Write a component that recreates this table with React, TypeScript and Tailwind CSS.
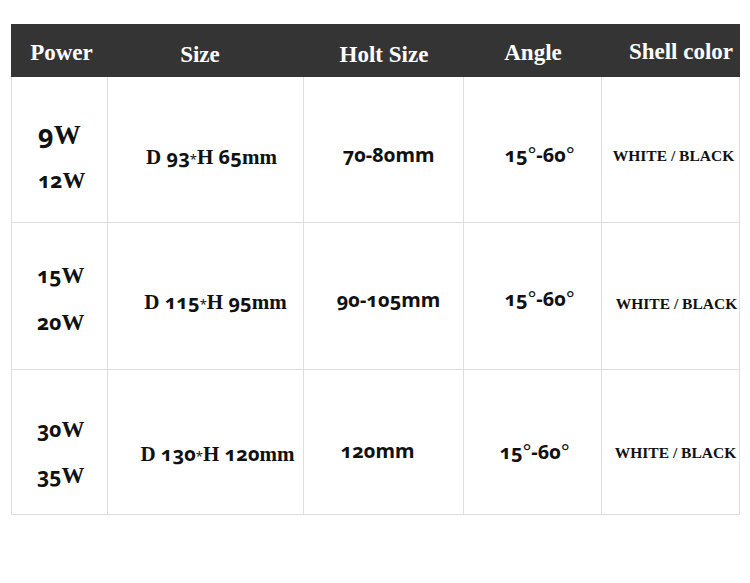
const serif = "font-['Liberation_Serif','Times_New_Roman',serif]";
const num = "font-['Noto_Sans','DejaVu_Sans',sans-serif] oldstyle-nums";

function N({ children, size = 'text-[21px]' }: { children: React.ReactNode; size?: string }) {
  return <span className={`${num} ${size}`}>{children}</span>;
}

function Deg() {
  return <span className="font-normal">°</span>;
}

function Star() {
  return <span className={`${num} text-[13px] font-normal`}>*</span>;
}

export default function App() {
  return (
    <div className={`min-h-[583px] w-[750px] bg-white pt-[24px] pl-[11px] font-bold text-[#111] ${serif}`}>
      <div className="grid w-[729px] grid-cols-[97px_196px_160px_138px_138px]">
        {/* header */}
        <div className="h-[53px] bg-[#343434] pt-[17px] pl-[4px] text-center text-[23px] leading-[24px] text-white">Power</div>
        <div className="h-[53px] bg-[#343434] pt-[19px] pr-[12px] text-center text-[23px] leading-[24px] text-white">Size</div>
        <div className="h-[53px] bg-[#343434] pt-[19px] text-center text-[23px] leading-[24px] text-white">Holt Size</div>
        <div className="h-[53px] bg-[#343434] pt-[17px] text-center text-[23px] leading-[24px] text-white">Angle</div>
        <div className="h-[53px] bg-[#343434] pt-[16px] pl-[20px] text-center text-[23px] leading-[24px] whitespace-nowrap text-white">Shell color</div>

        {/* row 1 */}
        <div className="h-[146px] border-x border-b border-[#dedede] pt-[42px] pl-[26px]">
          <div className="h-[30px] text-[27px] leading-[30px]"><N size="text-[27px]">9</N>W</div>
          <div className="mt-[16px] h-[30px] text-[23px] leading-[30px]"><N>12</N>W</div>
        </div>
        <div className="h-[146px] border-r border-b border-[#dedede] pt-[68px] pl-[12px] text-center text-[21px] leading-[24px] whitespace-nowrap">
          D <N size="text-[20px]">93</N><Star />H <N size="text-[20px]">65</N>mm
        </div>
        <div className={`h-[146px] border-r border-b border-[#dedede] pt-[66px] pl-[10px] text-center text-[20px] leading-[24px] ${num}`}>70-80mm</div>
        <div className={`h-[146px] border-r border-b border-[#dedede] pt-[66px] pl-[14px] text-center text-[20px] leading-[24px] ${num}`}>15<Deg />-60<Deg /></div>
        <div className="h-[146px] border-r border-b border-[#dedede] pt-[69px] pl-[6px] text-center text-[15.5px] leading-[20px] whitespace-nowrap">WHITE / BLACK</div>

        {/* row 2 */}
        <div className="h-[147px] border-x border-b border-[#dedede] pt-[37px] pl-[25px]">
          <div className="h-[30px] text-[23px] leading-[30px]"><N>15</N>W</div>
          <div className="mt-[17px] h-[30px] text-[23px] leading-[30px]"><N>20</N>W</div>
        </div>
        <div className="h-[147px] border-r border-b border-[#dedede] pt-[67px] pl-[20px] text-center text-[21px] leading-[24px] whitespace-nowrap">
          D <N size="text-[20px]">115</N><Star />H <N size="text-[20px]">95</N>mm
        </div>
        <div className={`h-[147px] border-r border-b border-[#dedede] pt-[65px] pl-[10px] text-center text-[20px] leading-[24px] ${num}`}>90-105mm</div>
        <div className={`h-[147px] border-r border-b border-[#dedede] pt-[64px] pl-[14px] text-center text-[20px] leading-[24px] ${num}`}>15<Deg />-60<Deg /></div>
        <div className="h-[147px] border-r border-b border-[#dedede] pt-[71px] pl-[12px] text-center text-[15.5px] leading-[20px] whitespace-nowrap">WHITE / BLACK</div>

        {/* row 3 */}
        <div className="h-[145px] border-x border-b border-[#dedede] pt-[44px] pl-[25px]">
          <div className="h-[30px] text-[23px] leading-[30px]"><N>30</N>W</div>
          <div className="mt-[16px] h-[30px] text-[23px] leading-[30px]"><N>35</N>W</div>
        </div>
        <div className="h-[145px] border-r border-b border-[#dedede] pt-[72px] pl-[24px] text-center text-[21px] leading-[24px] whitespace-nowrap">
          D <N size="text-[20px]">130</N><Star />H <N size="text-[20px]">120</N>mm
        </div>
        <div className={`h-[145px] border-r border-b border-[#dedede] pt-[69px] pr-[12px] text-center text-[20px] leading-[24px] ${num}`}>120mm</div>
        <div className={`h-[145px] border-r border-b border-[#dedede] pt-[70px] pl-[4px] text-center text-[20px] leading-[24px] ${num}`}>15<Deg />-60<Deg /></div>
        <div className="h-[145px] border-r border-b border-[#dedede] pt-[73px] pl-[10px] text-center text-[15.5px] leading-[20px] whitespace-nowrap">WHITE / BLACK</div>
      </div>
    </div>
  );
}
